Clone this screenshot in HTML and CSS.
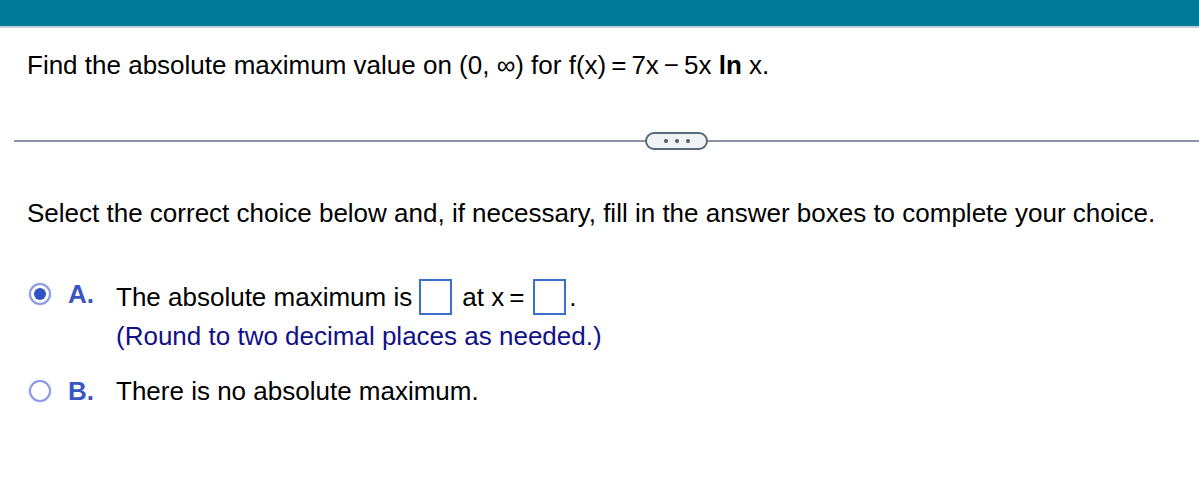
FILE: index.html
```html
<!DOCTYPE html>
<html>
<head>
<meta charset="utf-8">
<link rel="stylesheet" href="styles.css">
</head>
<body>
<div class="topbar"></div>
<div class="content">
  <p class="question">Find the absolute maximum value on (0, ∞) for f(x)<span class="op">=</span>7x<span class="op">−</span>5x <b>ln</b> x.</p>
  <div class="divider">
    <div class="line"></div>
    <div class="pill"><span></span><span></span><span></span></div>
    <div class="line"></div>
  </div>
  <p class="instruct">Select the correct choice below and, if necessary, fill in the answer boxes to complete your choice.</p>
  <div class="choices">
    <div class="choice">
      <span class="radio checked"></span>
      <span class="letter">A.</span>
      <div class="body">
        <div class="row1">The absolute maximum is<span class="box"></span>at x<span class="op">=</span><span class="box last"></span>.</div>
        <div class="hint">(Round to two decimal places as needed.)</div>
      </div>
    </div>
    <div class="choice choice-b">
      <span class="radio"></span>
      <span class="letter">B.</span>
      <div class="body">
        <div class="row1">There is no absolute maximum.</div>
      </div>
    </div>
  </div>
</div>
</body>
</html>
```

FILE: styles.css
```css
* { box-sizing: border-box; }
html, body { margin: 0; padding: 0; background: #fff; }
body {
  font-family: "Liberation Sans", Arial, sans-serif;
  color: #000;
  font-size: 26px;
  line-height: 30px;
  width: 1199px;
  height: 481px;
  overflow: hidden;
}
.topbar {
  height: 28px;
  background: #007a99;
  border-bottom: 2px solid #c5d0dc;
}
.content { padding: 0 0 0 14px; }
.question {
  margin: 22px 0 0 13px;
}
.op { margin: 0 5px; }
.divider {
  display: flex;
  align-items: center;
  margin-top: 52px;
  height: 18px;
}
.line { height: 2px; background: #8a94a0; flex: 0 0 631px; }
.line + .pill + .line { flex: 1 1 auto; }
.pill {
  flex: 0 0 63px;
  height: 18px;
  border: 2px solid #5a6877;
  border-radius: 9px;
  background: #eef3f5;
  display: flex;
  justify-content: center;
  align-items: center;
  gap: 7px;
}
.pill span { width: 4px; height: 4px; border-radius: 50%; background: #4f5b66; }
.instruct {
  margin: 48px 0 0 13px;
}
.choices { margin-top: 51px; padding-left: 15px; }
.choice { display: flex; align-items: flex-start; }
.choice-b { margin-top: 25px; }
.radio {
  width: 22px; height: 22px;
  border-radius: 50%;
  border: 2px solid #8a9ae0;
  box-shadow: 0 0 2px #c0c8f0;
  margin-top: 4px;
  display: flex; align-items: center; justify-content: center;
  flex: 0 0 22px;
}
.radio.checked::after {
  content: "";
  width: 12px; height: 12px; border-radius: 50%;
  background: #3452c8;
}
.letter {
  color: #3a56c4;
  font-weight: bold;
  margin-left: 17px;
  width: 48px;
  flex: 0 0 48px;
}
.row1 { display: flex; align-items: center; white-space: pre; }
.box {
  display: inline-block;
  width: 33px; height: 36px;
  border: 2px solid #3b6fcf;
  margin: 0 10px 0 7px;
}
.box.last { margin: 0 3px 0 4px; }
.hint { color: #10108a; margin-top: 6px; }
```
